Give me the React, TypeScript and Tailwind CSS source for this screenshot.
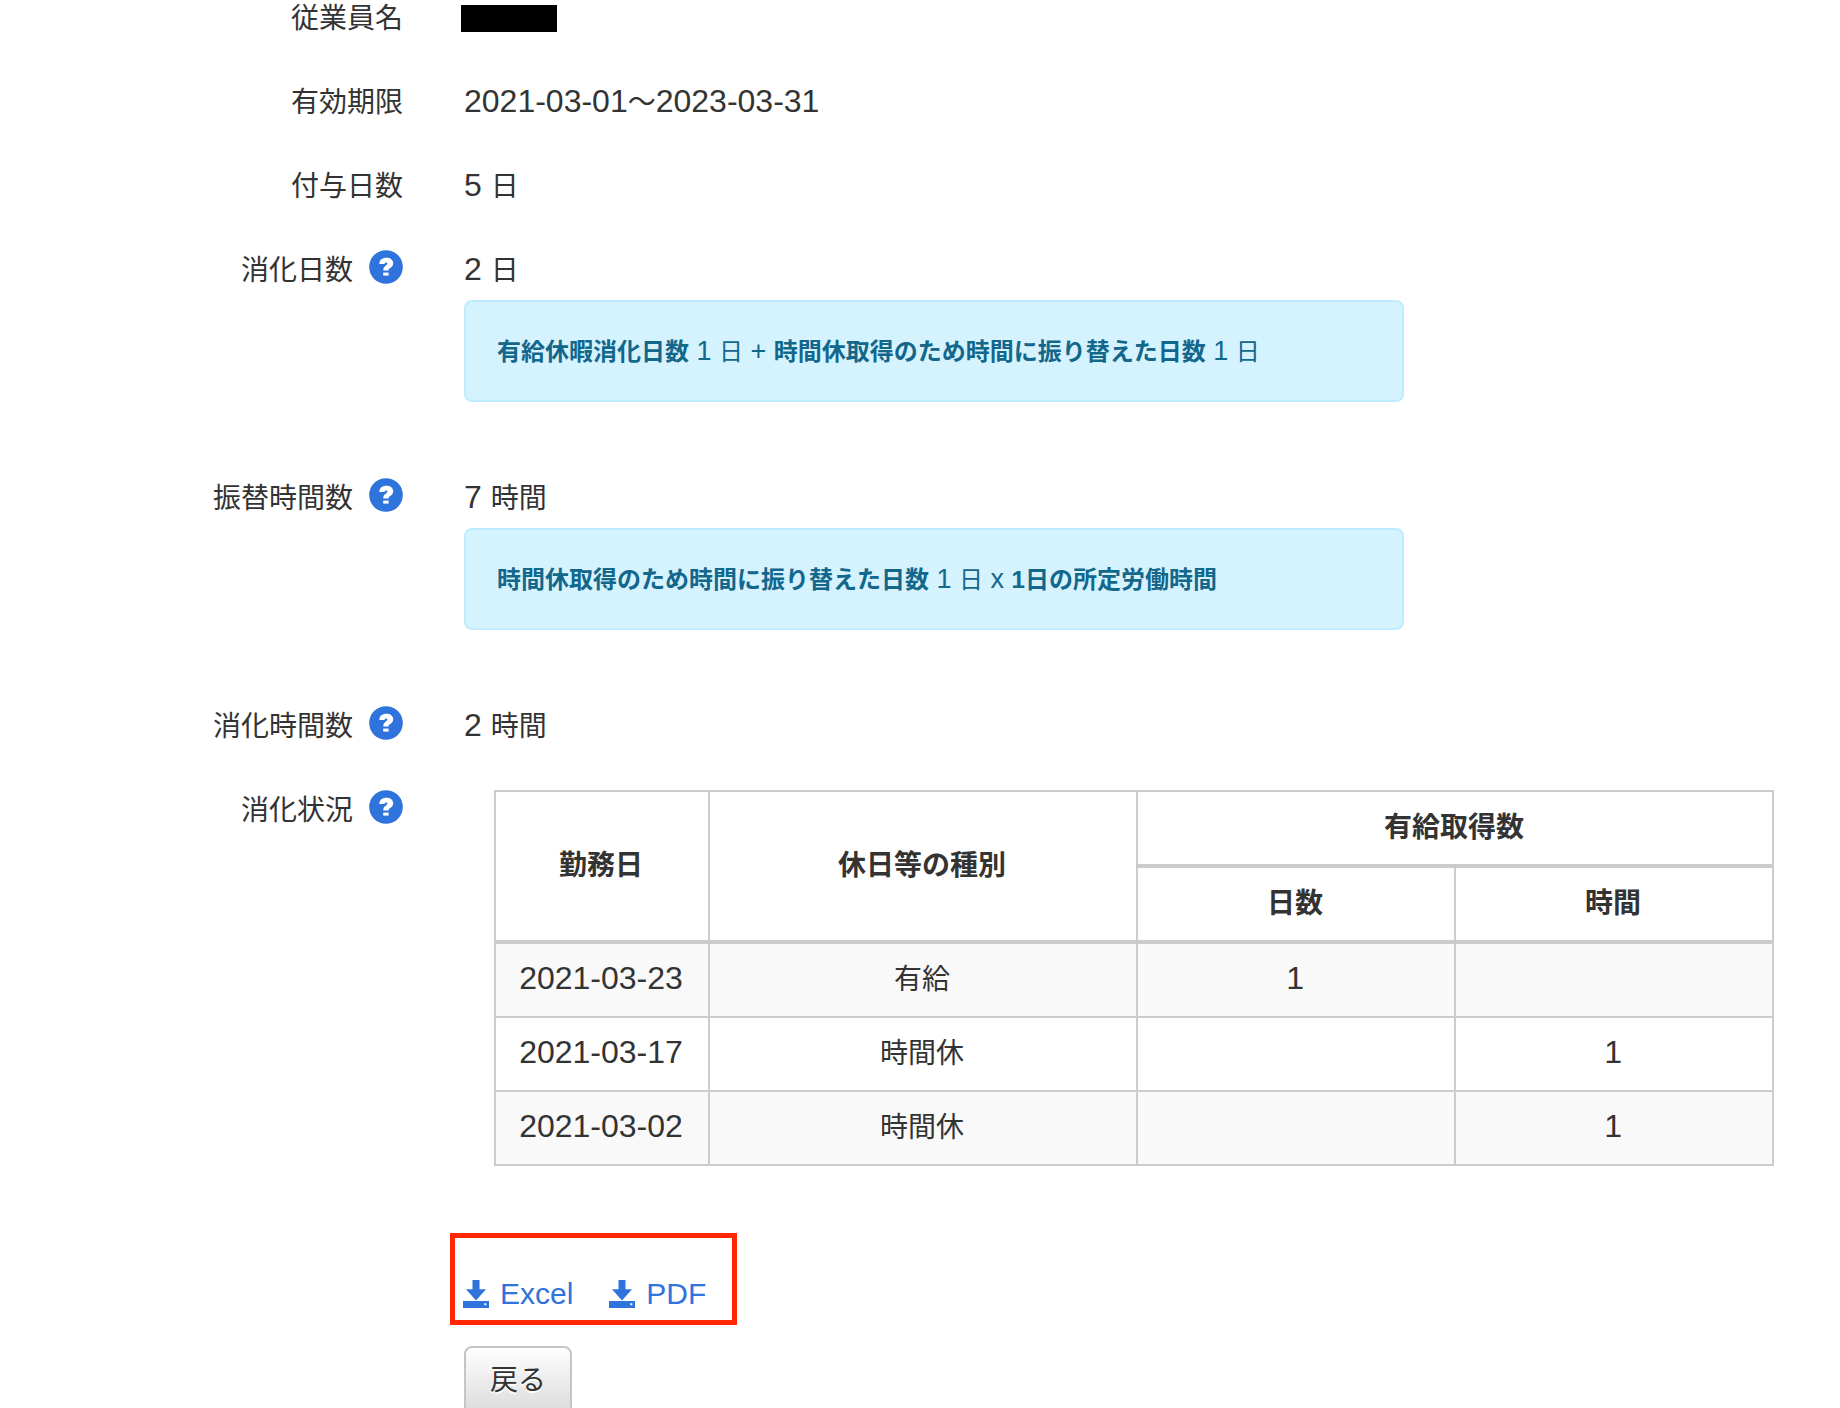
import type { ReactNode } from "react";

const DAYS = [
  { date: "2021-03-23", type: "有給", days: "1", hours: "" },
  { date: "2021-03-17", type: "時間休", days: "", hours: "1" },
  { date: "2021-03-02", type: "時間休", days: "", hours: "1" },
];

const HelpIcon = () => (
  <svg viewBox="0 0 34 34" className="size-[34px]" aria-hidden="true">
    <circle cx="17" cy="17" r="16.8" fill="#2f73dc" />
    <path
      d="M10.300 14C10.400 9.900 13.100 7.700 17.200 7.700c4.200 0 7 2 7 5.500 0 2.300-1.200 3.700-3 4.900-1.200.8-1.700 1.300-1.700 2.300h-5.200v-.6c0-2 .8-3.200 2.600-4.400 1-.6 1.500-1.100 1.500-1.800s-.5-1.100-1.300-1.100c-.9 0-1.400.5-1.500 1.500z"
      fill="#fff"
    />
    <path d="M14.200 22.600h5.400v3h-5.400z" fill="#fff" />
  </svg>
);

const DownloadIcon = () => (
  <svg viewBox="0 0 26 28" className="h-7 w-[26px]" fill="#2f73dc" aria-hidden="true">
    <path d="M9.500 0h7v9.300h6.500L13 20.500 3 9.300h6.500z" />
    <path fillRule="evenodd" d="M0 21h26v7H0zM21.300 23.200h2v2h-2z" />
  </svg>
);

const Num = ({ children }: { children: ReactNode }) => (
  <span className="text-[32px] leading-none">{children}</span>
);

type RowProps = {
  label: string;
  help?: boolean;
  children: ReactNode;
};

const Row = ({ label, help, children }: RowProps) => (
  <div className="flex gap-[61px]">
    <dt className="flex w-[403px] shrink-0 items-start justify-end gap-4">
      {label}
      {help && (
        <button type="button" aria-label={`${label}の説明`} className="-mt-0.5">
          <HelpIcon />
        </button>
      )}
    </dt>
    <dd className="min-w-0 flex-1">{children}</dd>
  </div>
);

const Formula = ({ children }: { children: ReactNode }) => (
  <p className="mt-[10px] mb-8 max-w-[940px] rounded-lg border-2 border-[#bfebff] bg-[#d5f2ff] px-[31px] pt-[31px] pb-[29px] text-[24px] text-[#12678a]">
    {children}
  </p>
);

const FormulaText = ({ children }: { children: ReactNode }) => (
  <span className="text-[27px] leading-none">{children}</span>
);

const th = "border-t-2 border-b-2 border-l-2 border-[#ccc] py-[17px] pr-0.5 font-bold";
const td = "border-t-2 border-l-2 border-[#ccc] py-[17px] pr-0.5";

const UsageTable = () => (
  <div className="-mt-0.5 mr-[66px] ml-[30px]">
    <table className="w-full table-fixed border-separate border-spacing-0 border-r-2 border-b-2 border-[#ccc] text-center">
      <colgroup>
        <col className="w-[214px]" />
        <col className="w-[33.5%]" />
        <col />
        <col />
      </colgroup>
      <thead>
        <tr>
          <th rowSpan={2} className={th}>
            勤務日
          </th>
          <th rowSpan={2} className={th}>
            休日等の種別
          </th>
          <th colSpan={2} className={th}>
            有給取得数
          </th>
        </tr>
        <tr>
          <th className={th}>日数</th>
          <th className={th}>時間</th>
        </tr>
      </thead>
      <tbody>
        {DAYS.map((day) => (
          <tr key={day.date} className="odd:bg-[#f9f9f9]">
            <td className={td}>
              <Num>{day.date}</Num>
            </td>
            <td className={td}>{day.type}</td>
            <td className={td}>
              <Num>{day.days}</Num>
            </td>
            <td className={td}>
              <Num>{day.hours}</Num>
            </td>
          </tr>
        ))}
      </tbody>
    </table>
  </div>
);

export default function App() {
  return (
    <main className="h-screen overflow-hidden bg-white font-['Liberation_Sans','Noto_Sans_CJK_JP',sans-serif] text-[28px] leading-[38px] text-[#333]">
      <dl className="flex flex-col gap-[46px]">
        <Row label="従業員名">
          <span className="-ml-[3px] mt-[5px] block h-[27px] w-24 bg-black" />
        </Row>
        <Row label="有効期限">
          <Num>2021-03-01</Num>〜<Num>2023-03-31</Num>
        </Row>
        <Row label="付与日数">
          <Num>5 </Num>日
        </Row>
        <Row label="消化日数" help>
          <Num>2 </Num>日
          <Formula>
            <b>有給休暇消化日数</b>
            <FormulaText> 1 </FormulaText>日<FormulaText> + </FormulaText>
            <b>時間休取得のため時間に振り替えた日数</b>
            <FormulaText> 1 </FormulaText>日
          </Formula>
        </Row>
        <Row label="振替時間数" help>
          <Num>7 </Num>時間
          <Formula>
            <b>時間休取得のため時間に振り替えた日数</b>
            <FormulaText> 1 </FormulaText>日<FormulaText> x </FormulaText>
            <b>1日の所定労働時間</b>
          </Formula>
        </Row>
        <Row label="消化時間数" help>
          <Num>2 </Num>時間
        </Row>
        <Row label="消化状況" help>
          <UsageTable />
        </Row>
      </dl>

      <div className="mt-[67px] ml-[450px] flex h-[92px] w-[287px] items-end gap-9 border-[5px] border-[#ff2600] pb-[7px] pl-2 text-[30px] text-[#2f73dc]">
        <a href="#excel" className="flex items-center gap-[11px]">
          <DownloadIcon />
          Excel
        </a>
        <a href="#pdf" className="flex items-center gap-[11px]">
          <DownloadIcon />
          PDF
        </a>
      </div>

      <button
        type="button"
        className="mt-[21px] ml-[464px] rounded-lg border-2 border-[#c5c5c5] bg-linear-to-b from-white to-[#dadada] px-6 py-[14px] text-shadow-[0_2px_1px_#fff]"
      >
        戻る
      </button>
    </main>
  );
}
